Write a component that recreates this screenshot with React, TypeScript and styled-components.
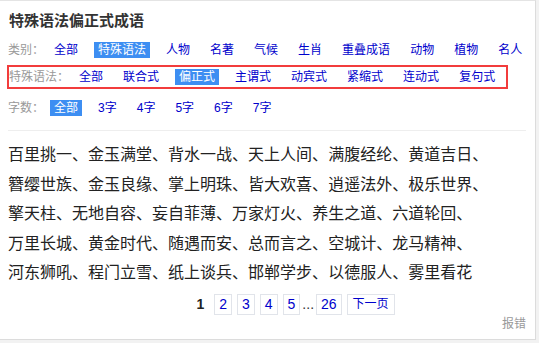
import React from "react";
import styled, { createGlobalStyle } from "styled-components";

const GlobalStyle = createGlobalStyle`
  html, body {
    margin: 0;
    padding: 0;
    background: #f2f2f2;
    font-family: "Liberation Sans", "Noto Sans CJK SC", sans-serif;
  }
`;

const categories = ["全部", "特殊语法", "人物", "名著", "气候", "生肖", "重叠成语", "动物", "植物", "名人"];
const grammars = ["全部", "联合式", "偏正式", "主谓式", "动宾式", "紧缩式", "连动式", "复句式"];
const counts = ["全部", "3字", "4字", "5字", "6字", "7字"];

const idioms = [
  "百里挑一", "金玉满堂", "背水一战", "天上人间", "满腹经纶", "黄道吉日",
  "簪缨世族", "金玉良缘", "掌上明珠", "皆大欢喜", "逍遥法外", "极乐世界",
  "擎天柱", "无地自容", "妄自菲薄", "万家灯火", "养生之道", "六道轮回",
  "万里长城", "黄金时代", "随遇而安", "总而言之", "空城计", "龙马精神",
  "河东狮吼", "程门立雪", "纸上谈兵", "邯郸学步", "以德服人", "雾里看花",
];

const Card = styled.div`
  width: 536px;
  height: 340px;
  box-sizing: border-box;
  background: #fff;
  border-top: 1px solid #e4e4e4;
  border-right: 1px solid #dcdcdc;
  border-bottom: 1px solid #dcdcdc;
  padding: 0 9px 0 8px;
`;

const Title = styled.h1`
  margin: 10px 0 0 1px;
  font-size: 15px;
  line-height: 20px;
  font-weight: bold;
  color: #333;
`;

const Row = styled.div<{ $top: number }>`
  display: flex;
  align-items: center;
  height: 28px;
  margin-top: ${(p) => p.$top}px;
  font-size: 12px;
`;

const MarkedRow = styled.div`
  display: inline-flex;
  align-items: center;
  height: 24px;
  box-sizing: border-box;
  margin: 1px 0 0 -1px;
  padding: 0 1px 0 0;
  border: 2px solid #f23c3c;
  font-size: 12px;
`;

const Label = styled.span`
  color: #999;
  line-height: 16px;
  white-space: nowrap;
`;

const Item = styled.a<{ $active?: boolean }>`
  margin: 0 6px;
  padding: 0 4px;
  line-height: 16px;
  white-space: nowrap;
  color: ${(p) => (p.$active ? "#fff" : "#0000cc")};
  background: ${(p) => (p.$active ? "#3d8ef2" : "transparent")};
  text-decoration: none;
  cursor: pointer;
`;

const Divider = styled.div`
  height: 1px;
  margin-top: 8px;
  background: #eee;
`;

const IdiomList = styled.div`
  margin-top: 9px;
  font-size: 16px;
  line-height: 29.5px;
  color: #222;
`;

const Idiom = styled.span`
  display: inline-block;
  white-space: nowrap;
`;

const Pager = styled.div`
  display: flex;
  justify-content: center;
  align-items: center;
  gap: 5px;
  margin-top: 6px;
  padding-left: 52px;
  font-size: 14px;
`;

const PageBox = styled.a<{ $current?: boolean; $small?: boolean }>`
  display: inline-block;
  height: 21px;
  box-sizing: border-box;
  padding: 0 ${(p) => (p.$small ? 5 : 4)}px;
  border: 1px solid ${(p) => (p.$current ? "transparent" : "#e1e4ea")};
  line-height: 19px;
  font-size: ${(p) => (p.$small ? 12 : 14)}px;
  font-weight: ${(p) => (p.$current ? "bold" : "normal")};
  color: ${(p) => (p.$current ? "#222" : "#0000cc")};
  text-decoration: none;
`;

const Dots = styled.span`
  margin: 0 -3px;
  color: #333;
  line-height: 19px;
`;

const Report = styled.div`
  margin-top: 1px;
  text-align: right;
  font-size: 12px;
  line-height: 16px;
  color: #999;
`;

export default function App() {
  return (
    <>
      <GlobalStyle />
      <Card>
        <Title>特殊语法偏正式成语</Title>
        <Row $top={5}>
          <Label>类别：</Label>
          {categories.map((c) => (
            <Item key={c} $active={c === "特殊语法"}>{c}</Item>
          ))}
        </Row>
        <MarkedRow>
          <Label>特殊语法：</Label>
          {grammars.map((g) => (
            <Item key={g} $active={g === "偏正式"}>{g}</Item>
          ))}
        </MarkedRow>
        <Row $top={5}>
          <Label>字数：</Label>
          {counts.map((c) => (
            <Item key={c} $active={c === "全部"}>{c}</Item>
          ))}
        </Row>
        <Divider />
        <IdiomList>
          {idioms.map((w, i) => (
            <Idiom key={w}>
              {w}
              {i < idioms.length - 1 ? "、" : ""}
            </Idiom>
          ))}
        </IdiomList>
        <Pager>
          <PageBox $current>1</PageBox>
          <PageBox>2</PageBox>
          <PageBox>3</PageBox>
          <PageBox>4</PageBox>
          <PageBox>5</PageBox>
          <Dots>...</Dots>
          <PageBox>26</PageBox>
          <PageBox $small>下一页</PageBox>
        </Pager>
        <Report>报错</Report>
      </Card>
    </>
  );
}
